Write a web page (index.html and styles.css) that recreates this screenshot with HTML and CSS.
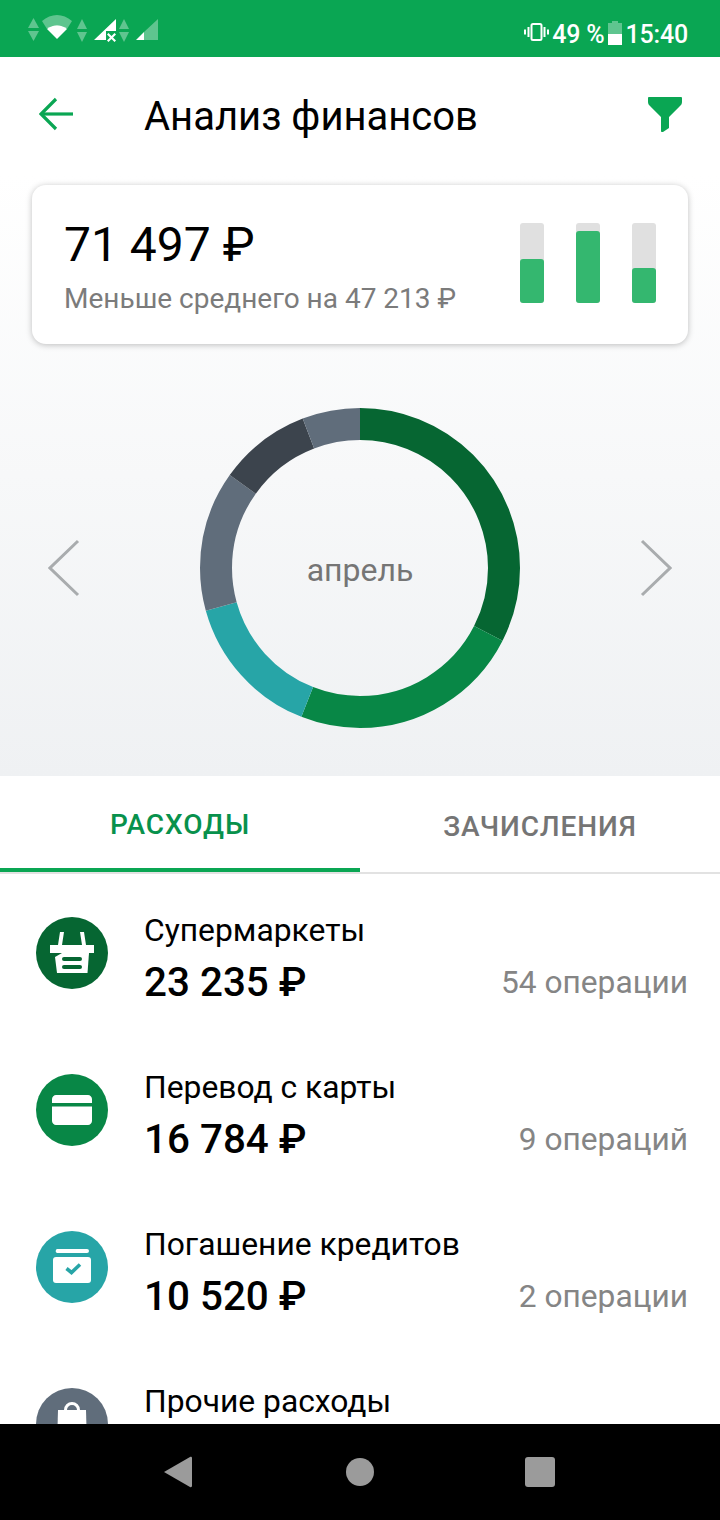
FILE: index.html
```html
<!DOCTYPE html>
<html lang="ru">

<head>
    <meta charset="UTF-8">
    <meta name="viewport" content="width=device-width, initial-scale=1.0">
    <title>Анализ финансов</title>
    <link rel="stylesheet" href="styles.css">
</head>

<body>
    <div class="screen">
        <div class="status-bar">
            <svg class="status-left" width="140" height="30" viewBox="24 12 140 30">
                <g fill="#fff" fill-opacity=".35">
                    <path d="M33.500 18l5.500 10H28z" />
                    <path d="M28 31h11l-5.500 10z" />
                    <path d="M82 19l5 10H77z" />
                    <path d="M77 32h10l-5 10z" />
                    <path d="M124 19l5 10h-10z" />
                    <path d="M119 32h10l-5 10z" />
                    <path d="M42 21C51 13 63 13 72 21L67 29C61 24 53 24 47 29z" />
                    <path d="M158 19v21h-14v-8z" />
                </g>
                <g fill="#fff">
                    <path d="M47 29C53 24 61 24 67 29L57 39z" />
                    <path d="M116 19v12h-10v9H94z" />
                    <path d="M136 40l8-8v8z" />
                    <path d="M109 34l3 3 3-3 1.500 1.500-3 3 3 3-1.500 1.500-3-3-3 3-1.500-1.500 3-3-3-3z" transform="translate(-.5 -1)" />
                </g>
            </svg>
            <div class="status-right">
                <svg width="25" height="18" viewBox="0 0 25 18" fill="none" stroke="#fff">
                    <rect x="7.500" y="1" width="10" height="16" rx="1.500" stroke-width="2" />
                    <path d="M4.500 4v10M20.500 4v10" stroke-width="2" />
                    <path d="M1 6.500v5M24 6.500v5" stroke-width="2" />
                </svg>
                <span class="battery-text">49 %</span>
                <svg class="battery" width="14" height="24" viewBox="0 0 14 24">
                    <path d="M4 0h6v2h4v22H0V2h4z" fill="#fff" fill-opacity=".35" />
                    <path d="M0 13h14v11H0z" fill="#fff" />
                </svg>
                <span class="clock">15:40</span>
            </div>
        </div>

        <div class="top-bar">
            <svg class="back" width="34" height="34" viewBox="0 0 34 34" fill="none" stroke="#0aa653" stroke-width="3.200">
                <path d="M34 17H4" />
                <path d="M17 2L2 17l15 15" />
            </svg>
            <h1>Анализ финансов</h1>
            <svg class="filter" width="34" height="36" viewBox="0 0 34 36">
                <path d="M1 1h32c.500 0 1 .500 1 1v4c0 2-1 3-2 4L21 21v11l-6 4c-1 .500-2 0-2-1V21L2 10C1 9 0 8 0 6V2c0-.500 .500-1 1-1z" fill="#0aa653" />
            </svg>
        </div>

        <div class="summary">
            <div class="card">
                <div class="card-text">
                    <div class="card-total">71 497 ₽</div>
                    <div class="card-note">Меньше среднего на 47 213 ₽</div>
                </div>
                <div class="bars">
                    <div class="bar"><div class="bar-fill" style="height: 55%"></div></div>
                    <div class="bar"><div class="bar-fill" style="height: 90%"></div></div>
                    <div class="bar"><div class="bar-fill" style="height: 43%"></div></div>
                </div>
            </div>

            <div class="chart-row">
                <svg class="arrow" width="32" height="58" viewBox="0 0 32 58" fill="none" stroke="#a9acae" stroke-width="3">
                    <path d="M30 2L2 29l28 27" />
                </svg>
                <div class="donut">
                    <!-- сегменты в градусах, pathLength=360 -->
                    <svg width="320" height="320" viewBox="0 0 320 320" fill="none" stroke-width="32">
                        <g transform="rotate(-90 160 160)">
                            <circle cx="160" cy="160" r="144" pathLength="360" stroke="#066632" stroke-dasharray="117 243" />
                            <circle cx="160" cy="160" r="144" pathLength="360" stroke="#088746" stroke-dasharray="84.500 275.500" stroke-dashoffset="-117" />
                            <circle cx="160" cy="160" r="144" pathLength="360" stroke="#27a5a7" stroke-dasharray="53 307" stroke-dashoffset="-201.500" />
                            <circle cx="160" cy="160" r="144" pathLength="360" stroke="#606d7b" stroke-dasharray="51 309" stroke-dashoffset="-254.500" />
                            <circle cx="160" cy="160" r="144" pathLength="360" stroke="#3c444d" stroke-dasharray="33.500 326.500" stroke-dashoffset="-305.500" />
                            <circle cx="160" cy="160" r="144" pathLength="360" stroke="#606d7b" stroke-dasharray="21 339" stroke-dashoffset="-339" />
                        </g>
                    </svg>
                    <span class="donut-label">апрель</span>
                </div>
                <svg class="arrow" width="32" height="58" viewBox="0 0 32 58" fill="none" stroke="#a9acae" stroke-width="3">
                    <path d="M2 2l28 27L2 56" />
                </svg>
            </div>
        </div>

        <div class="tabs">
            <div class="tab active">РАСХОДЫ</div>
            <div class="tab">ЗАЧИСЛЕНИЯ</div>
        </div>

        <div class="list">
            <div class="row">
                <div class="icon icon-market">
                    <svg width="44" height="44" viewBox="0 0 44 44" fill="#fff">
                        <path d="M10 1h4l-2 13H8zM30 1h4l2 13h-4z" />
                        <path d="M0 14h44v8H0z" />
                        <path d="M5 26l7-4h27l-1.500 20H7z" />
                        <rect x="12" y="26" width="20" height="4" rx="2" fill="#066632" />
                        <rect x="12" y="34" width="20" height="4" rx="2" fill="#066632" />
                    </svg>
                </div>
                <div class="row-body">
                    <div class="row-title">Супермаркеты</div>
                    <div class="row-line">
                        <span class="row-sum">23 235 ₽</span>
                        <span class="row-count">54 операции</span>
                    </div>
                </div>
            </div>
            <div class="row">
                <div class="icon icon-card">
                    <svg width="40" height="30" viewBox="0 0 40 30" fill="#fff">
                        <path d="M4 0h32c2 0 4 2 4 4v4H0V4c0-2 2-4 4-4zM0 11.500h28h12V26c0 2-2 4-4 4H4c-2 0-4-2-4-4z" />
                    </svg>
                </div>
                <div class="row-body">
                    <div class="row-title">Перевод с карты</div>
                    <div class="row-line">
                        <span class="row-sum">16 784 ₽</span>
                        <span class="row-count">9 операций</span>
                    </div>
                </div>
            </div>
            <div class="row">
                <div class="icon icon-credit">
                    <svg class="credit-glyph" width="38" height="34" viewBox="0 0 38 34">
                        <path d="M6 0h28a2 2 0 0 1 0 4H4a2 2 0 0 1 2-4z" fill="#fff" />
                        <rect y="8" width="38" height="26" rx="3" fill="#fff" />
                        <path d="M13.500 19.500l5 4 8.500-8" fill="none" stroke="#27a5a7" stroke-width="3.600" />
                    </svg>
                </div>
                <div class="row-body">
                    <div class="row-title">Погашение кредитов</div>
                    <div class="row-line">
                        <span class="row-sum">10 520 ₽</span>
                        <span class="row-count">2 операции</span>
                    </div>
                </div>
            </div>
            <div class="row">
                <div class="icon icon-other">
                    <svg width="30" height="44" viewBox="0 0 30 44">
                        <path d="M8.500 8a6.500 6.500 0 0 1 13 0" fill="none" stroke="#fff" stroke-width="3" />
                        <path d="M1 8h28l1 36H0z" fill="#fff" />
                    </svg>
                </div>
                <div class="row-body">
                    <div class="row-title">Прочие расходы</div>
                </div>
            </div>
        </div>

        <div class="nav-bar">
            <svg width="30" height="32" viewBox="0 0 30 32">
                <path d="M1 16L27 1c1-.500 2 0 2 1v28c0 1-1 1.500-2 1z" fill="#9b9b9b" />
            </svg>
            <div class="nav-home"></div>
            <div class="nav-square"></div>
        </div>
    </div>
</body>

</html>
```

FILE: styles.css
```css
* {
    box-sizing: border-box;
}

html,
body {
    margin: 0;
}

body {
    font-family: Roboto, "Noto Sans", sans-serif;
    background-color: #fff;
}

.screen {
    width: 720px;
    height: 1520px;
    display: flex;
    flex-direction: column;
    overflow: hidden;
}

/* статус-бар */
.status-bar {
    height: 57px;
    flex: none;
    padding: 12px 32px 0 24px;
    display: flex;
    justify-content: space-between;
    align-items: flex-start;
    background-color: #0aa653;
    color: #fff;
}

.status-right {
    display: flex;
    align-items: center;
    height: 40px;
    font-size: 25px;
    font-weight: 500;
}

.status-right span {
    position: relative;
    top: 2px;
}

.battery-text {
    margin-left: 3px;
    margin-right: 3px;
    letter-spacing: -.2px;
}

.battery {
    margin-right: 4px;
    margin-top: 1px;
}

.clock {
    letter-spacing: -.2px;
}

/* заголовок */
.top-bar {
    height: 118px;
    flex: none;
    padding: 0 38px 0 39px;
    display: flex;
    align-items: center;
}

.top-bar h1 {
    flex: 1;
    margin: 0 0 0 71px;
    font-size: 40px;
    font-weight: 400;
    color: #000;
}

.back {
    margin-top: -4px;
}

.filter {
    margin-top: -5px;
}

.summary {
    height: 601px;
    flex: none;
    padding: 10px 32px 0;
    background: linear-gradient(#fff, #eff1f3);
}

.card {
    height: 159px;
    padding: 0 32px;
    display: flex;
    justify-content: space-between;
    align-items: center;
    background-color: #fff;
    border-radius: 14px;
    box-shadow: 0 1px 6px rgba(0, 0, 0, .25);
}

.card-total {
    font-size: 48px;
    line-height: 58px;
    color: #000;
    margin-top: 1px;
}

.card-note {
    margin-top: 9px;
    font-size: 28px;
    line-height: 32px;
    color: #7b7b7b;
}

.bars {
    display: flex;
    gap: 32px;
    margin-top: -4px;
}

.bar {
    width: 24px;
    height: 80px;
    display: flex;
    align-items: flex-end;
    background-color: #e0e0e0;
    border-radius: 3px;
}

.bar-fill {
    width: 100%;
    background-color: #34b76f;
    border-radius: 3px;
}

.chart-row {
    margin-top: 64px;
    padding: 0 16px;
    display: flex;
    justify-content: space-between;
    align-items: center;
}

.donut {
    position: relative;
    width: 320px;
    height: 320px;
    display: flex;
    align-items: center;
    justify-content: center;
}

.donut svg {
    display: block;
}

.donut-label {
    position: absolute;
    margin-top: 4px;
    font-size: 32px;
    color: #757575;
}

/* вкладки */
.tabs {
    height: 98px;
    flex: none;
    display: flex;
    border-bottom: 2px solid #e2e2e2;
}

.tab {
    width: 360px;
    height: 96px;
    padding-top: 4px;
    display: flex;
    align-items: center;
    justify-content: center;
    font-size: 28px;
    font-weight: 500;
    letter-spacing: .9px;
    color: #757575;
}

.tab.active {
    color: #08914c;
    border-bottom: 4px solid #0aa653;
}

/* список операций */
.list {
    flex: 1;
    min-height: 0;
    overflow: hidden;
    padding-top: 43px;
}

.row {
    height: 157px;
    padding: 0 32px 0 36px;
    display: flex;
    align-items: flex-start;
}

.icon {
    width: 72px;
    height: 72px;
    flex: none;
    border-radius: 50%;
    display: flex;
    align-items: center;
    justify-content: center;
}

.icon-market {
    background-color: #066632;
}

.icon-card {
    background-color: #088746;
}

.icon-credit {
    background-color: #27a5a7;
}

.icon-other {
    background-color: #606d7b;
}

.credit-glyph {
    margin-top: -2px;
}

.row-body {
    flex: 1;
    margin-left: 36px;
    margin-top: -7px;
}

.row-title {
    font-size: 31.800px;
    line-height: 40px;
    color: #000;
}

.row-line {
    display: flex;
    justify-content: space-between;
    align-items: center;
    margin-top: 10px;
}

.row-sum {
    font-size: 40.400px;
    font-weight: 500;
    line-height: 46px;
    color: #000;
}

.row-count {
    font-size: 31.700px;
    color: #858585;
    margin-top: -2px;
}

/* нижняя панель */
.nav-bar {
    height: 96px;
    flex: none;
    padding: 0 165px 0 163px;
    display: flex;
    justify-content: space-between;
    align-items: center;
    background-color: #000;
}

.nav-home {
    width: 28px;
    height: 28px;
    margin-left: 2px;
    border-radius: 50%;
    background-color: #9b9b9b;
}

.nav-square {
    width: 30px;
    height: 30px;
    border-radius: 3px;
    background-color: #9b9b9b;
}
```
